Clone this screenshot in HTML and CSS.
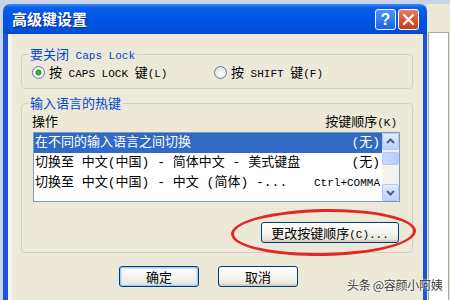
FILE: index.html
```html
<!DOCTYPE html>
<html lang="zh-CN">
<head>
    <meta charset="UTF-8">
    <title>高级键设置</title>
    <link rel="stylesheet" href="styles.css">
</head>
<body>

<div class="screen">
    <div class="dialog">
        <div class="titlebar">
            <span class="title">高级键设置</span>
            <div class="caption-buttons">
                <span class="cap-btn help">?</span>
                <span class="cap-btn close">
                    <svg width="21" height="21" viewBox="0 0 21 21">
                        <path d="M6 6 L15 15 M15 6 L6 15" stroke="#fff" stroke-width="2.4" stroke-linecap="round"/>
                    </svg>
                </span>
            </div>
        </div>

        <div class="client">
            <fieldset class="group">
                <legend>要关闭<span class="mono"> Caps Lock</span></legend>
                <div class="radios">
                    <label class="radio first"><span class="dot checked"></span><span>按<span class="mono"> CAPS LOCK </span>键<span class="mono">(L)</span></span></label>
                    <label class="radio"><span class="dot"></span><span>按<span class="mono"> SHIFT </span>键<span class="mono">(F)</span></span></label>
                </div>
            </fieldset>

            <fieldset class="group hotkeys">
                <legend>输入语言的热键</legend>
                <div class="list-head">
                    <span>操作</span>
                    <span>按键顺序<span class="mono">(K)</span></span>
                </div>
                <div class="listbox">
                    <div class="rows">
                        <div class="row selected"><span>在不同的输入语言之间切换</span><span>(无)</span></div>
                        <div class="row"><span>切换至 中文(中国) - 简体中文 - 美式键盘</span><span>(无)</span></div>
                        <div class="row"><span>切换至 中文(中国) - 中文 (简体) -...</span><span class="mono">Ctrl+COMMA</span></div>
                    </div>
                    <div class="scrollbar">
                        <span class="sb-btn">
                            <svg width="15" height="15" viewBox="0 0 15 15"><path d="M4 9 L7.5 5.5 L11 9" fill="none" stroke="#4d6185" stroke-width="2"/></svg>
                        </span>
                        <span class="sb-thumb"></span>
                        <span class="sb-track"></span>
                        <span class="sb-btn">
                            <svg width="15" height="15" viewBox="0 0 15 15"><path d="M4 6 L7.5 9.5 L11 6" fill="none" stroke="#4d6185" stroke-width="2"/></svg>
                        </span>
                    </div>
                </div>
                <div class="change-row">
                    <button class="xp-btn change">更改按键顺序<span class="mono">(C)...</span></button>
                </div>
            </fieldset>

            <div class="dialog-buttons">
                <button class="xp-btn default">确定</button>
                <button class="xp-btn">取消</button>
            </div>

            <!-- 红色圈注 -->
            <div class="circle-mark"></div>
        </div>
    </div>

    <div class="side">
        <div class="side-panel"></div>
    </div>

    <div class="watermark">头条 @容颜小阿姨</div>
</div>

</body>
</html>
```

FILE: styles.css
```css
body {
    margin: 0;
    font-family: "Noto Sans CJK SC", sans-serif;
}

.screen {
    position: relative;
    width: 450px;
    height: 300px;
    overflow: hidden;
    box-sizing: border-box;
    padding: 4px 0 0 3px;
    display: flex;
    background: #c9d3e8;
}

.dialog {
    width: 424px;
    display: flex;
    flex-direction: column;
}

.titlebar {
    height: 30px;
    flex: none;
    display: flex;
    align-items: center;
    justify-content: space-between;
    padding: 0 8px 0 9px;
    border-radius: 7px 7px 0 0;
    background: linear-gradient(#3d8dfb 0%, #0a5fe8 12%, #0055e5 45%, #0051dc 85%, #0a46c8 100%);
}

.title {
    color: #fff;
    font-size: 15px;
    font-weight: bold;
    line-height: 18px;
    text-shadow: 1px 1px 0 #0a2c8c;
}

.caption-buttons {
    display: flex;
    gap: 2px;
}

.cap-btn {
    width: 21px;
    height: 21px;
    box-sizing: border-box;
    border: 1px solid #fff;
    border-radius: 3px;
    display: flex;
    align-items: center;
    justify-content: center;
}

.cap-btn svg {
    margin: -1px;
}

.help {
    background: linear-gradient(#4a96fd, #1d62e6);
    color: #fff;
    font-family: "Liberation Sans", sans-serif;
    font-weight: bold;
    font-size: 16px;
    line-height: 19px;
}

.close {
    background: linear-gradient(#ea7f60, #d4502b 60%, #c2401c);
}

.client {
    position: relative;
    flex: 1;
    background: #ece9d8;
    border-left: 5px solid #1d53d8;
    border-right: 4px solid #1d53d8;
    box-shadow: inset 4px 0 0 #f5f4ee;
    padding: 12px 10px 0 13px;
    font-size: 13px;
    line-height: 16px;
    color: #000;
}

.mono {
    font-family: "Liberation Mono", monospace;
    font-size: 11px;
    line-height: 1;
}

.group {
    margin: 0;
    min-width: 0;
    padding: 2px 12px 8px 10px;
    border: 1px solid #d0d0bf;
    border-radius: 4px;
}

.group legend {
    height: 16px;
    margin-left: -4px;
    padding: 0 2px;
    color: #0046d5;
    line-height: 16px;
}

.radios {
    display: flex;
    height: 16px;
}

.radio {
    display: flex;
    align-items: center;
    white-space: pre;
}

.radio.first {
    width: 182px;
}

.dot {
    width: 13px;
    height: 13px;
    box-sizing: border-box;
    margin-right: 4px;
    border: 1px solid #5d7ba6;
    border-radius: 50%;
    background: radial-gradient(circle at 65% 65%, #fff, #dcd9d0);
}

.dot.checked {
    background: radial-gradient(circle, #45c045 0, #1f9c1f 2.5px, #fff 3.5px, #e2e0d8 100%);
}

.hotkeys {
    margin-top: 6px;
    padding-bottom: 9px;
}

.list-head {
    display: flex;
    justify-content: space-between;
    height: 16px;
    padding-right: 3px;
}

.listbox {
    margin: 3px 0 0 1px;
    height: 70px;
    box-sizing: border-box;
    border: 1px solid #7f9db9;
    background: #fff;
    display: grid;
    grid-template-columns: 1fr 17px;
    overflow: hidden;
}

.rows {
    font-family: "Liberation Mono", "Noto Sans CJK SC", monospace;
    min-width: 0;
}

.row {
    height: 20px;
    line-height: 20px;
    display: flex;
    justify-content: space-between;
    padding: 0 2px 0 1px;
    white-space: nowrap;
}

.row .mono {
    line-height: 20px;
}

.row.selected {
    background: #316ac5;
    color: #fff;
}

.scrollbar {
    display: flex;
    flex-direction: column;
    background: #f4f3ee;
}

.sb-btn {
    height: 17px;
    box-sizing: border-box;
    border: 1px solid #b5c8f3;
    border-radius: 2px;
    background: linear-gradient(#e3ebfd, #bcd0fb);
    display: flex;
    align-items: center;
    justify-content: center;
}

.sb-thumb {
    margin-top: 2px;
    height: 13px;
    box-sizing: border-box;
    border: 1px solid #b5c8f3;
    border-radius: 2px;
    background: linear-gradient(90deg, #c9d8fc, #b7cbfa);
}

.sb-track {
    flex: 1;
}

.change-row {
    display: flex;
    justify-content: flex-end;
    margin-top: 20px;
}

.xp-btn {
    height: 21px;
    box-sizing: border-box;
    padding: 0 8px;
    border: 1px solid #003c74;
    border-radius: 3px;
    background: linear-gradient(#ffffff, #f3f2ec 60%, #e3e0d6);
    box-shadow: inset 0 -2px 0 #d6d0c5;
    font-family: "Noto Sans CJK SC", sans-serif;
    font-size: 13px;
    line-height: 17px;
    color: #000;
}

.change {
    width: 138px;
    margin-right: 1px;
}

.dialog-buttons {
    display: flex;
    gap: 19px;
    margin-top: 13px;
    padding-left: 98px;
}

.dialog-buttons .xp-btn {
    width: 80px;
}

.xp-btn.default {
    box-shadow: inset 0 0 0 1px #a9c7f0, inset 0 0 0 2px #cfe2fb;
}

.circle-mark {
    position: absolute;
    left: 223px;
    top: 175px;
    width: 185px;
    height: 47px;
    box-sizing: border-box;
    border: 3px solid #e3262a;
    border-radius: 50%;
    transform: rotate(-1deg);
}

.side {
    flex: 1;
    background: #ece9d8;
    padding: 28px 1px 0 1px;
}

.side-panel {
    height: 100%;
    border: 1px solid #aca899;
    background: #fff;
}

.watermark {
    position: absolute;
    left: 347px;
    top: 277px;
    font-size: 12px;
    line-height: 15px;
    letter-spacing: -0.3px;
    color: #3a3a3a;
    text-shadow: 0 0 2px #fff, 0 0 2px #fff;
    white-space: nowrap;
}
```
